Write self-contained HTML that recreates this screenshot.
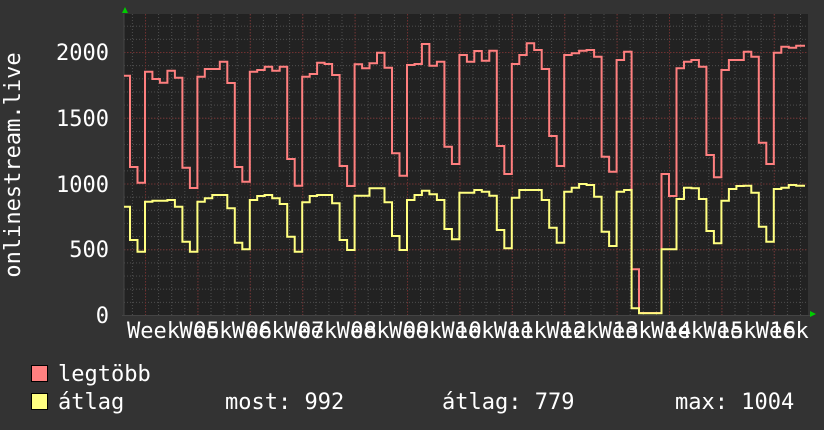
<!DOCTYPE html>
<html><head><meta charset="utf-8"><style>
html,body{margin:0;padding:0;background:#333;}
svg{display:block;}
text{font-family:"DejaVu Sans Mono","Liberation Mono",monospace;font-size:22px;fill:#fff;}
</style></head><body>
<svg width="824" height="430" viewBox="0 0 824 430" xmlns="http://www.w3.org/2000/svg">
<defs>
<pattern id="hmin" patternUnits="userSpaceOnUse" x="124" y="315" width="3" height="13.15"><rect x="0" y="0" width="1" height="1" fill="#4e4e4e"/></pattern>
<pattern id="vmin" patternUnits="userSpaceOnUse" x="145" y="14" width="13.1" height="3"><rect x="0" y="0" width="1" height="1" fill="#4e4e4e"/></pattern>
<pattern id="hmaj" patternUnits="userSpaceOnUse" x="124" y="315" width="3" height="65.75"><rect x="0" y="0" width="1.5" height="1" fill="#6e3030"/></pattern>
<pattern id="vmaj" patternUnits="userSpaceOnUse" x="145" y="14" width="52.4" height="3"><rect x="0" y="0" width="1" height="1.5" fill="#6e3030"/></pattern>
</defs>
<rect width="824" height="430" fill="#333"/>
<rect x="124" y="14" width="684" height="301" fill="#222"/>
<rect x="124" y="14" width="684" height="301" fill="url(#hmin)"/>
<rect x="124" y="14" width="684" height="301" fill="url(#vmin)"/>
<rect x="124" y="14" width="684" height="301" fill="url(#hmaj)"/>
<rect x="124" y="14" width="684" height="301" fill="url(#vmaj)"/>
<line x1="124" y1="14" x2="124" y2="316" stroke="#444" stroke-width="1"/>
<line x1="122" y1="315.5" x2="810" y2="315.5" stroke="#444" stroke-width="1"/>
<polygon points="122,13 128,13 125,7" fill="#0c0"/>
<polygon points="810,311 810,317 816,314" fill="#0c0"/>

<path fill="none" stroke="#ff7f7f" stroke-width="2" d="M124,75.7H130V167H137.5V182.7H145V71.7H152.4V79H159.9V82.7H167.4V70.7H174.9V77.7H182.4V167.7H189.9V188H197.4V76.7H204.8V69H219.8V61.7H227.3V83H234.8V167H242.3V181.7H249.8V71.7H257.2V70H264.7V66.7H272.2V70.7H279.7V66.7H287.2V159H294.7V185.7H302.2V76.7H309.7V74H317.1V62.7H324.6V64H332.1V75H339.6V166H347.1V186H354.6V64.3H362.1V68.3H369.5V63.3H377V52.7H384.5V67.7H392V153.3H399.5V175.7H407V65H414.5V64H421.9V44H429.4V65.7H436.9V61.7H444.4V146.7H451.9V164H459.4V55H466.9V61.7H474.3V51H481.8V60.7H489.3V50.7H496.8V146H504.3V174H511.8V64H519.3V55H526.7V43.3H534.2V50H541.7V69H549.2V136H556.7V166H564.2V55H571.7V53.3H579.1V50.7H586.6V50H594.1V56.7H601.6V156.7H609.1V171.7H616.6V60H624.1V51.7H631.6V269.3H639V313H661.5V174H669V196H676.5V68.3H684V61.7H691.4V60H698.9V66.7H706.4V155H713.9V177.3H721.4V70H728.9V60H743.8V51.7H751.3V56.7H758.8V142.7H766.3V164H773.8V52.7H781.3V46.7H788.8V47.7H796.2V45.7H805"/>
<path fill="none" stroke="#ffff80" stroke-width="2" d="M124,206.7H130V240H137.5V251.7H145V201.7H152.4V200.7H167.4V200H174.9V206.7H182.4V241.7H189.9V251.7H197.4V201.7H204.8V198.3H212.3V195H227.3V208.3H234.8V242.7H242.3V249.3H249.8V200H257.2V196H264.7V195H272.2V198.3H279.7V204H287.2V236.7H294.7V251.7H302.2V202.3H309.7V196H317.1V195H332.1V203.3H339.6V240H347.1V250H354.6V195.7H369.5V188.3H384.5V202.3H392V236H399.5V250H407V200H414.5V195H421.9V190.7H429.4V194.3H436.9V200H444.4V229H451.9V239.3H459.4V192.7H474.3V190H481.8V191.7H489.3V195.7H496.8V230H504.3V248.3H511.8V197.7H519.3V190H541.7V200H549.2V227.7H556.7V242.7H564.2V191.7H571.7V187.7H579.1V184H586.6V185H594.1V196.7H601.6V231.7H609.1V246H616.6V191.7H624.1V190H631.6V308.3H639V313.3H661.5V249.3H676.5V199H684V187.7H691.4V188.3H698.9V199H706.4V231H713.9V243.3H721.4V200.7H728.9V189H736.4V186H743.8V185.7H751.3V192.7H758.8V226.7H766.3V241.7H773.8V189H781.3V187.7H788.8V185H796.2V185.7H805"/>

<g text-anchor="end">
<text x="109" y="60">2000</text>
<text x="109" y="126">1500</text>
<text x="109" y="192">1000</text>
<text x="109" y="257">500</text>
<text x="109" y="323">0</text>
</g>
<text transform="translate(20,165) rotate(-90)" text-anchor="middle">onlinestream.live</text>

<g xml:space="preserve">
<text x="127" y="338">Week 05</text>
<text x="179.4" y="338">Week 06</text>
<text x="231.8" y="338">Week 07</text>
<text x="284.2" y="338">Week 08</text>
<text x="336.6" y="338">Week 09</text>
<text x="389" y="338">Week 10</text>
<text x="441.4" y="338">Week 11</text>
<text x="493.8" y="338">Week 12</text>
<text x="546.2" y="338">Week 13</text>
<text x="598.6" y="338">Week 14</text>
<text x="651" y="338">Week 15</text>
<text x="703.4" y="338">Week 16</text>
<text x="755.8" y="338">Week 17</text>
</g>

<rect x="31.5" y="365.5" width="16" height="16" fill="#ff8080" stroke="#000" stroke-width="1"/>
<rect x="31.5" y="393.5" width="16" height="16" fill="#ffff80" stroke="#000" stroke-width="1"/>
<text x="58" y="381">legtöbb</text>
<text x="58" y="409">átlag</text>
<text x="225" y="409">most: 992</text>
<text x="442" y="409">átlag: 779</text>
<text x="675" y="409">max: 1004</text>
</svg>
</body></html>
